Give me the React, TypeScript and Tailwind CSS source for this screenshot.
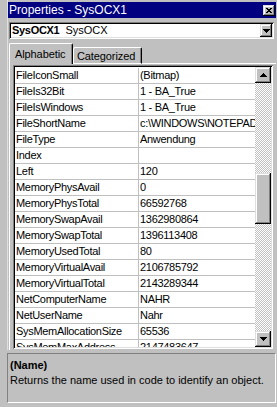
import React from 'react';

const rows: [string, string][] = [
  ['FileIconSmall', '(Bitmap)'],
  ['FileIs32Bit', '1 - BA_True'],
  ['FileIsWindows', '1 - BA_True'],
  ['FileShortName', 'c:\\WINDOWS\\NOTEPAD.EXE'],
  ['FileType', 'Anwendung'],
  ['Index', ''],
  ['Left', '120'],
  ['MemoryPhysAvail', '0'],
  ['MemoryPhysTotal', '66592768'],
  ['MemorySwapAvail', '1362980864'],
  ['MemorySwapTotal', '1396113408'],
  ['MemoryUsedTotal', '80'],
  ['MemoryVirtualAvail', '2106785792'],
  ['MemoryVirtualTotal', '2143289344'],
  ['NetComputerName', 'NAHR'],
  ['NetUserName', 'Nahr'],
  ['SysMemAllocationSize', '65536'],
  ['SysMemMaxAddress', '2147483647'],
];

const raised =
  'shadow-[inset_-1px_-1px_0_#000,inset_1px_1px_0_#dfdfdf,inset_-2px_-2px_0_#808080,inset_2px_2px_0_#fff]';
const sunken =
  'shadow-[inset_1px_1px_0_#808080,inset_-1px_-1px_0_#fff,inset_2px_2px_0_#000,inset_-2px_-2px_0_#dfdfdf]';

const Arrow = ({ up }: { up?: boolean }) => (
  <svg width="7" height="4" viewBox="0 0 7 4" shapeRendering="crispEdges">
    {up ? (
      <path d="M3 0h1v1h1v1h1v1h1v1H0V3h1V2h1V1h1z" fill="#000" />
    ) : (
      <path d="M0 0h7v1H6v1H5v1H4v1H3V3H2V2H1V1H0z" fill="#000" />
    )}
  </svg>
);

export default function App() {
  return (
    <div className="w-[277px] h-[407px] overflow-hidden bg-[#c0c0c0] text-[11px] leading-[15px] text-black font-['Liberation_Sans',Arial,sans-serif]">
      <div className="ml-[7px] border-l border-[#dfdfdf] pr-[1px] pt-[2px]">
        {/* title bar */}
        <div className="h-[16px] bg-[#000080] flex items-center justify-between pl-[1px] pr-[1px]">
          <span className="text-white text-[12px]">Properties - SysOCX1</span>
          <div className={`w-[12px] h-[11px] bg-[#c0c0c0] flex items-center justify-center ${raised}`}>
            <svg width="6" height="5" viewBox="0 0 6 5" shapeRendering="crispEdges">
              <path d="M0 0h2v1h2V0h2v1H5v1H4v1h1v1h1v1H4V4H2v1H0V4h1V3h1V2H1V1H0z" fill="#000" />
            </svg>
          </div>
        </div>

        {/* object combo */}
        <div className={`mt-[4px] ml-[1px] mr-[2px] h-[17px] bg-white flex items-center pl-[3px] pr-[2px] ${sunken}`}>
          <span className="font-bold tracking-[-0.3px]">SysOCX1</span>
          <span className="ml-[6px] flex-1">SysOCX</span>
          <div className={`w-[12px] h-[13px] bg-[#c0c0c0] flex items-center justify-center ${raised}`}>
            <Arrow />
          </div>
        </div>

        {/* tabs */}
        <div className="mt-[4px] ml-[1px] h-[21px] flex items-end tracking-[-0.1px]">
          <div className="h-[21px] w-[64px] border-l border-t border-white rounded-tl-[2px] shadow-[inset_-1px_0_0_#808080] border-r border-r-black rounded-tr-[2px] pl-[5px] pt-[3px]">
            Alphabetic
          </div>
          <div className="h-[17px] w-[69px] border-t border-white border-b shadow-[inset_1px_0_0_#fff,inset_-1px_0_0_#808080] border-r border-r-black rounded-t-[2px] pl-[4px] pt-[1px]">
            Categorized
          </div>
          <div className="flex-1 h-[1px] bg-white" />
        </div>

        {/* tab page */}
        <div className="ml-[1px] w-[266px] border-l border-white pl-[3px] pt-[1px] pb-[1px]">
          <div className={`w-[260px] h-[284px] bg-white p-[2px] flex ${sunken}`}>
            <div className="w-[240px] h-[280px] overflow-hidden pt-[1px] tracking-[-0.3px]">
              {rows.map(([name, value]) => (
                <div key={name} className="h-[16px] flex border-b border-[#c0c0c0]">
                  <div className="w-[123px] pl-[1px] whitespace-nowrap overflow-hidden">{name}</div>
                  <div className="w-[1px] bg-[#c0c0c0]" />
                  <div className="w-[116px] pl-[1px] whitespace-nowrap overflow-hidden">{value}</div>
                </div>
              ))}
            </div>
            {/* scrollbar */}
            <div className="w-[16px] h-[280px] flex flex-col">
              <div className={`h-[16px] bg-[#c0c0c0] flex items-center justify-center ${raised}`}>
                <Arrow up />
              </div>
              <div className="flex-1 pt-[90px] bg-[repeating-conic-gradient(#c0c0c0_0%_25%,#ffffff_0%_50%)] bg-[length:2px_2px]">
                <div className={`h-[51px] bg-[#c0c0c0] ${raised}`} />
              </div>
              <div className={`h-[16px] bg-[#c0c0c0] flex items-center justify-center ${raised}`}>
                <Arrow />
              </div>
            </div>
          </div>
        </div>
      </div>

      {/* description */}
      <div className="mt-[3px] ml-[7px] w-[269px] h-[50px] border-t border-l border-[#808080] border-r border-b border-r-white border-b-white pl-[2px] pt-[4px]">
        <div className="font-bold">(Name)</div>
        <div className="whitespace-nowrap">Returns the name used in code to identify an object.</div>
      </div>
    </div>
  );
}
